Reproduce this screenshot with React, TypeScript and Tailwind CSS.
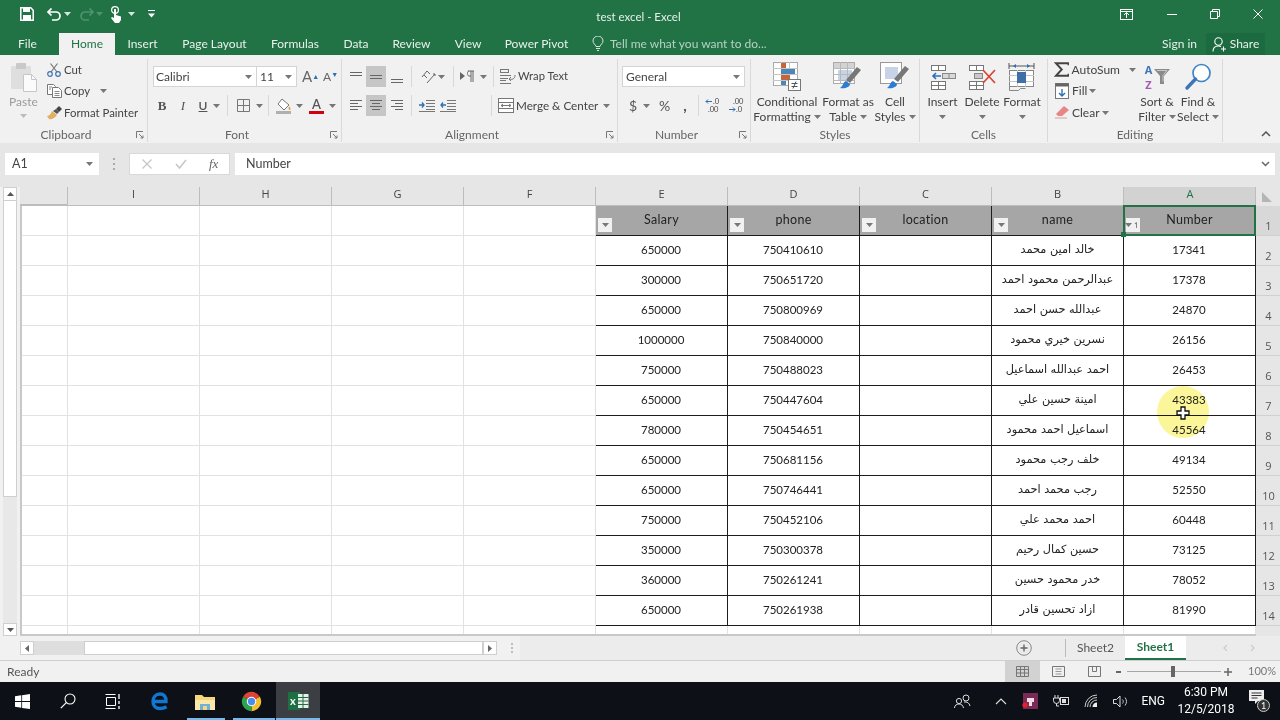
import React from "react";

const rows = [
  ["650000", "750410610", "خالد امين محمد", "17341"],
  ["300000", "750651720", "عبدالرحمن محمود احمد", "17378"],
  ["650000", "750800969", "عبدالله حسن احمد", "24870"],
  ["1000000", "750840000", "نسرين خيري محمود", "26156"],
  ["750000", "750488023", "احمد عبدالله اسماعيل", "26453"],
  ["650000", "750447604", "امينة حسين علي", "43383"],
  ["780000", "750454651", "اسماعيل احمد محمود", "45564"],
  ["650000", "750681156", "خلف رجب محمود", "49134"],
  ["650000", "750746441", "رجب محمد احمد", "52550"],
  ["750000", "750452106", "احمد محمد علي", "60448"],
  ["350000", "750300378", "حسين كمال رحيم", "73125"],
  ["360000", "750261241", "خدر محمود حسين", "78052"],
  ["650000", "750261938", "ازاد تحسين قادر", "81990"],
];

const emptyCols = ["", "I", "H", "G", "F"];

const Caret = ({ color = "#777" }: { color?: string }) => (
  <svg width="7" height="4" viewBox="0 0 7 4" className="shrink-0">
    <path d="M0 0h7L3.5 4z" fill={color} />
  </svg>
);

const Launcher = () => (
  <svg width="8" height="8" viewBox="0 0 8 8" className="shrink-0">
    <path d="M0.5 7V0.5H7M3 3l4 4M7 4.5V7H4.5" fill="none" stroke="#777" strokeWidth="1" />
  </svg>
);

const Lines = ({ ys, x1, x2 }: { ys: number[]; x1: number[]; x2: number[] }) => (
  <svg width="14" height="14" viewBox="0 0 14 14">
    {ys.map((y, i) => (
      <path key={i} d={`M${x1[i]} ${y}H${x2[i]}`} stroke="#666" strokeWidth="1" />
    ))}
  </svg>
);

const Sep = () => <div className="h-[21px] w-px shrink-0 bg-[#d8d8d8]" />;

function Group({ label, className, launcher, children }: { label: string; className: string; launcher?: boolean; children: React.ReactNode }) {
  return (
    <div className={`relative flex h-[83px] shrink-0 flex-col border-r border-[#d9d9d9] ${className}`}>
      <div className="h-[68px]">{children}</div>
      <div className={`flex h-[15px] items-center justify-center text-[12px] leading-none text-[#666] ${launcher ? "pr-[15px]" : ""}`}>{label}</div>
      {launcher && (
        <div className="absolute bottom-[3px] right-[3px]">
          <Launcher />
        </div>
      )}
    </div>
  );
}

function BigButton({ className, icon, line1, line2 }: { className: string; icon: React.ReactNode; line1: string; line2?: string }) {
  return (
    <div className={`flex shrink-0 flex-col items-center ${className}`}>
      <div className="flex h-[35px] items-center justify-center">{icon}</div>
      <div className="whitespace-nowrap text-[12px] leading-[15px] text-[#444]">{line1}</div>
      <div className="flex h-[15px] items-center gap-[3px] whitespace-nowrap text-[12px] leading-[15px] text-[#444]">
        {line2}
        <Caret />
      </div>
    </div>
  );
}

const CondIcon = () => (
  <svg width="28" height="30" viewBox="0 0 28 30">
    <rect x="0.5" y="0.5" width="24" height="23" fill="#fff" stroke="#aaa" />
    <path d="M8.5 0v24M16.5 0v24M0 6.5h25M0 12.5h25M0 18.5h25" stroke="#c5c5c5" />
    <rect x="8" y="1" width="5" height="5" fill="#c8643c" />
    <rect x="8" y="7" width="14" height="5" fill="#4a86b8" />
    <rect x="8" y="13" width="9" height="5" fill="#c8643c" />
    <rect x="8" y="19" width="5" height="4" fill="#4a86b8" />
    <rect x="15.5" y="17.5" width="12" height="11" fill="#fff" stroke="#777" />
    <path d="M18.5 21.5h6M18.5 24.5h6M23 19.5l-3 7" stroke="#555" fill="none" />
  </svg>
);

const TableIcon = () => (
  <svg width="30" height="30" viewBox="0 0 30 30">
    <rect x="0.5" y="0.5" width="21" height="21" fill="#fff" stroke="#aaa" />
    <rect x="1" y="1" width="20" height="5" fill="#d3d3d3" />
    <rect x="5" y="8" width="14" height="11" fill="#c7d3e6" />
    <path d="M7.5 0v22M14.5 0v22M0 6.5h22M0 12.5h22M0 18.5h22" stroke="#b8b8b8" />
    <path d="M24 5l4 3-11 13-4-3z" fill="#777" />
    <path d="M13 19c-3 1-2 4-6 7 5 1 10-1 10-4z" fill="#2b7cd3" />
  </svg>
);

const CellStylesIcon = () => (
  <svg width="30" height="30" viewBox="0 0 30 30">
    <rect x="0.5" y="0.5" width="21" height="21" fill="#fff" stroke="#999" />
    <rect x="5" y="5" width="13" height="12" fill="#c7d3e6" />
    <path d="M25 4l4 3-11 13-4-3z" fill="#777" />
    <path d="M13 19c-3 1-2 4-6 7 5 1 10-1 10-4z" fill="#2b7cd3" />
  </svg>
);

const InsertIcon = () => (
  <svg width="26" height="26" viewBox="0 0 26 26">
    <rect x="1.5" y="1.5" width="14" height="5" fill="#fff" stroke="#777" />
    <path d="M8.5 1.5v5" stroke="#777" />
    <rect x="1.5" y="17.5" width="14" height="8" fill="#fff" stroke="#777" />
    <path d="M8.5 17.5v8M1.5 21.5h14" stroke="#777" />
    <rect x="12.5" y="9.5" width="13" height="5" fill="#d8d8d8" stroke="#888" />
    <path d="M19 9.5v5" stroke="#888" />
    <path d="M11 12H3M6 9l-3 3 3 3" fill="none" stroke="#2b6fb5" strokeWidth="1.6" />
  </svg>
);

const DeleteIcon = () => (
  <svg width="28" height="26" viewBox="0 0 28 26">
    <rect x="1.5" y="1.5" width="14" height="5" fill="#fff" stroke="#777" />
    <path d="M8.5 1.5v5" stroke="#777" />
    <rect x="1.5" y="17.5" width="14" height="8" fill="#fff" stroke="#777" />
    <path d="M8.5 17.5v8M1.5 21.5h14" stroke="#777" />
    <rect x="6.5" y="9.5" width="8" height="5" fill="#c9c9c9" stroke="#888" />
    <path d="M15 6l12 13M27 6L15 19" stroke="#d8452e" strokeWidth="1.7" />
  </svg>
);

const FormatIcon = () => (
  <svg width="28" height="30" viewBox="0 0 28 30">
    <path d="M1 4h25M1 1v6M26 1v6" stroke="#555" fill="none" />
    <path d="M5 4l3-2v4zM22 4l-3-2v4z" fill="#2b6fb5" />
    <rect x="1.5" y="8.5" width="24" height="16" fill="#fff" stroke="#888" />
    <path d="M9.5 8v17M17.5 8v17M1 13.5h25M1 19.5h25" stroke="#c5c5c5" />
    <rect x="9" y="10" width="9" height="11" fill="#3f6fa8" />
    <path d="M1.5 25v3.5h9l2-2h5" fill="none" stroke="#888" />
  </svg>
);

const PasteIcon = () => (
  <svg width="28" height="30" viewBox="0 0 28 30">
    <rect x="1" y="4" width="20" height="23" rx="1" fill="#dedede" />
    <rect x="6" y="1" width="10" height="6" rx="1" fill="#c9c9c9" />
    <path d="M13.5 12.5h8l5 5v12h-13z" fill="#fbfbfb" stroke="#c6c6c6" />
    <path d="M21.5 12.5v5h5" fill="none" stroke="#c6c6c6" />
  </svg>
);

const CutIcon = () => (
  <svg width="14" height="14" viewBox="0 0 14 14">
    <path d="M4 9L10.5 0.5M10 9L3.5 0.5" stroke="#777" strokeWidth="1.2" fill="none" />
    <circle cx="3" cy="11" r="2.3" fill="none" stroke="#3f74b5" strokeWidth="1.2" />
    <circle cx="11" cy="11" r="2.3" fill="none" stroke="#3f74b5" strokeWidth="1.2" />
  </svg>
);

const CopyIcon = () => (
  <svg width="15" height="14" viewBox="0 0 15 14">
    <path d="M0.5 0.5h6l2 2v8h-8z" fill="#fff" stroke="#777" />
    <path d="M5.5 3.5h6l3 3v7h-9z" fill="#fff" stroke="#777" />
    <path d="M7.5 7.5h5M7.5 9.500h5M7.5 11.5h5M2 3h3M2 5h2" stroke="#888" />
  </svg>
);

const PainterIcon = () => (
  <svg width="15" height="14" viewBox="0 0 15 14">
    <path d="M0 10c3 0 4-3 5-5l5 4c-2 3-6 5-8 4z" fill="#e0b060" />
    <path d="M6 5l4 3 2-2-3-3z" fill="#555" />
    <path d="M9 3l3-3 3 3-3 3z" fill="#444" />
  </svg>
);

const BordersIcon = () => (
  <svg width="13" height="13" viewBox="0 0 13 13">
    <path d="M0.5 0.5h12v12h-12zM6.5 0.5v12M0.5 6.5h12" fill="none" stroke="#777" />
  </svg>
);

const FillIcon = () => (
  <svg width="16" height="16" viewBox="0 0 16 16">
    <path d="M6 1l7 6-5 5-6-6z" fill="#fff" stroke="#777" />
    <path d="M13 8c1 1.5 2 2.5 1.5 3.5-.7 1-2 .3-2-.7z" fill="#e3a23a" />
    <rect x="0" y="13" width="15" height="3" fill="#b0b0b0" />
  </svg>
);

const OrientIcon = () => (
  <svg width="15" height="15" viewBox="0 0 15 15">
    <path d="M1 8l5-6 3 3M3 6l3 3" fill="none" stroke="#666" />
    <path d="M6 14l8-9M12 5h2v2" fill="none" stroke="#666" />
  </svg>
);

const RtlIcon = () => (
  <svg width="15" height="13" viewBox="0 0 15 13">
    <path d="M0 2l5 4-5 4z" fill="#666" />
    <path d="M8 1h6M9 1c-2 0-2 5 0 5h2M11 1v11M13 1v11" fill="none" stroke="#666" />
  </svg>
);

const WrapIcon = () => (
  <svg width="16" height="15" viewBox="0 0 16 15">
    <rect x="0.5" y="0.5" width="8" height="3" fill="none" stroke="#777" />
    <path d="M0 6.5h11M0 9.5h8M0 11.5h6M0 14.5h11" stroke="#777" />
    <path d="M15 6c0 4-3 5-6 4M11 8l-2 2 2 2" fill="none" stroke="#777" />
  </svg>
);

const MergeIcon = () => (
  <svg width="16" height="15" viewBox="0 0 16 15">
    <rect x="0.5" y="0.5" width="15" height="14" fill="#fff" stroke="#777" />
    <path d="M0 4.5h16M0 10.5h16M3 7.5h10M5 6L3 7.5 5 9M11 6l2 1.5L11 9" fill="none" stroke="#777" />
  </svg>
);

const IndentIcon = ({ out }: { out?: boolean }) => (
  <svg width="16" height="12" viewBox="0 0 16 12">
    <path d="M7 0.5h9M7 3.5h9M7 6.5h9M7 9.5h9M0 11.5h16" stroke="#777" />
    <path d={out ? "M6 5H1M3 2.5L1 5l2 2.5" : "M0 5h5M3 2.5L5 5 3 7.5"} fill="none" stroke="#2b6fb5" strokeWidth="1.3" />
  </svg>
);

const DecIcon = ({ dir }: { dir: "more" | "less" }) => (
  <svg width="16" height="15" viewBox="0 0 16 15">
    <path d={dir === "more" ? "M7 3.5H1M3 1.5l-2 2 2 2" : "M1 11.5h6M5 9.5l2 2-2 2"} fill="none" stroke="#2b6fb5" />
    <text x={dir === "more" ? 8 : 5} y="6" fontSize="7.5" fill="#444">{dir === "more" ? ".0" : ".00"}</text>
    <text x={dir === "more" ? 3 : 8} y="14" fontSize="7.5" fill="#444">{dir === "more" ? ".00" : ".0"}</text>
  </svg>
);

const SigmaIcon = () => (
  <svg width="16" height="15" viewBox="0 0 16 15">
    <path d="M15 3V1H2l6 6.5L2 14h13v-2" fill="none" stroke="#444" strokeWidth="2" />
  </svg>
);

const FillDownIcon = () => (
  <svg width="14" height="16" viewBox="0 0 14 16">
    <rect x="0.5" y="0.5" width="13" height="15" fill="#fff" stroke="#777" />
    <rect x="0.5" y="0.5" width="13" height="3" fill="#666" />
    <path d="M7 6v7M4 10l3 3 3-3" fill="none" stroke="#2b6fb5" strokeWidth="1.4" />
  </svg>
);

const EraserIcon = () => (
  <svg width="14" height="13" viewBox="0 0 14 13">
    <path d="M9 0l5 4-7 6H3L1 8z" fill="#e88585" />
    <path d="M0 12h12" stroke="#d8a0a0" />
  </svg>
);

const SortIcon = () => (
  <div className="flex items-center">
    <div className="flex w-[11px] flex-col text-center font-['Open_Sans',sans-serif] text-[11px] font-bold leading-[15px]">
      <span className="text-[#3f74b5]">A</span>
      <span className="text-[#a35bb5]">Z</span>
    </div>
    <svg width="17" height="15" viewBox="0 0 17 15">
      <path d="M0 0h16l-6 7v8H6V7z" fill="#8a8a8a" />
      <path d="M3 1.500h10l-4 5v6" fill="none" stroke="#c8c8c8" />
    </svg>
  </div>
);

const FindIcon = () => (
  <svg width="28" height="28" viewBox="0 0 28 28">
    <circle cx="17.5" cy="10" r="8.5" fill="#fff" stroke="#3f86c9" strokeWidth="1.7" />
    <path d="M11.5 16L3 25" stroke="#3f74b5" strokeWidth="3.4" strokeLinecap="round" />
  </svg>
);

function Ribbon() {
  return (
    <div className="flex h-[88px] bg-[#f1f1f1] pt-[4px]">
      <Group label="Clipboard" className="w-[148px]" launcher>
        <div className="flex">
          <div className="flex w-[47px] shrink-0 flex-col items-center text-[#9b9b9b]">
            <div className="flex h-[35px] items-center">
              <PasteIcon />
            </div>
            <div className="text-[12px] leading-[15px]">Paste</div>
            <div className="mt-[5px]">
              <Caret color="#bbb" />
            </div>
          </div>
          <div className="text-[11.4px] leading-none text-[#444]">
            <div className="flex h-[21px] items-center gap-[3px]">
              <CutIcon /> Cut
            </div>
            <div className="flex h-[22px] items-center gap-[2px]">
              <CopyIcon /> Copy <span className="ml-[8px]"><Caret /></span>
            </div>
            <div className="flex h-[21px] items-center gap-[2px] whitespace-nowrap">
              <PainterIcon /> Format Painter
            </div>
          </div>
        </div>
      </Group>

      <Group label="Font" className="w-[194px]" launcher>
        <div className="flex items-center pl-[5px] pt-[7px]">
          <div className="flex h-[21px] w-[104px] items-center justify-between border border-[#d4d4d4] bg-white pl-[2px] pr-[4px] text-[12px] text-[#444]">
            Calibri <Caret />
          </div>
          <div className="flex h-[21px] w-[40px] items-center justify-between border border-l-0 border-[#d4d4d4] bg-white pl-[3px] pr-[4px] text-[12px] text-[#444]">
            11 <Caret />
          </div>
          <span className="ml-[5px] w-[21px] text-[15px] leading-none text-[#666]">A<sup className="text-[7px] text-[#2b6fb5]">▲</sup></span>
          <span className="text-[12px] leading-none text-[#666]">A<sup className="text-[7px] text-[#2b6fb5]">▼</sup></span>
        </div>
        <div className="mt-[8px] flex h-[21px] items-center text-[#555]">
          <span className="ml-[8px] w-[12px] text-center font-['Liberation_Serif',serif] text-[13px] font-bold">B</span>
          <span className="ml-[9px] w-[12px] text-center font-['Liberation_Serif',serif] text-[13px] italic">I</span>
          <span className="ml-[8px] w-[12px] text-center text-[12px] font-semibold underline">U</span>
          <span className="ml-[4px]"><Caret /></span>
          <span className="ml-[7px]"><Sep /></span>
          <span className="ml-[9px]"><BordersIcon /></span>
          <span className="ml-[6px]"><Caret /></span>
          <span className="ml-[5px]"><Sep /></span>
          <span className="ml-[7px]"><FillIcon /></span>
          <span className="ml-[4px]"><Caret /></span>
          <span className="ml-[6px] flex w-[15px] flex-col items-center">
            <span className="text-[13px] font-semibold leading-[12px] text-[#555]">A</span>
            <span className="mt-[1px] h-[3px] w-[15px] bg-[#d2010f]" />
          </span>
          <span className="ml-[5px]"><Caret /></span>
        </div>
      </Group>

      <Group label="Alignment" className="w-[276px]" launcher>
        <div className="flex items-center pl-[3px] pt-[7px] text-[11.2px] text-[#444]">
          <div className="flex h-[21px] w-[21px] items-center justify-center"><Lines ys={[2.5, 5.5]} x1={[1, 1]} x2={[13, 13]} /></div>
          <div className="flex h-[21px] w-[20px] items-center justify-center bg-[#c6c6c6]"><Lines ys={[5.5, 8.5]} x1={[1, 1]} x2={[13, 13]} /></div>
          <div className="flex h-[21px] w-[21px] items-center justify-center"><Lines ys={[9.5, 12.5]} x1={[1, 1]} x2={[13, 13]} /></div>
          <span className="ml-[4px]"><Sep /></span>
          <span className="ml-[9px]"><OrientIcon /></span>
          <span className="ml-[2px]"><Caret /></span>
          <span className="ml-[8px]"><Sep /></span>
          <span className="ml-[6px]"><RtlIcon /></span>
          <span className="ml-[5px]"><Caret /></span>
          <span className="ml-[6px]"><Sep /></span>
          <span className="ml-[6px] flex items-center gap-[2px] whitespace-nowrap"><WrapIcon /> Wrap Text</span>
        </div>
        <div className="mt-[8px] flex items-center pl-[3px] text-[11.7px] text-[#444]">
          <div className="flex h-[21px] w-[21px] items-center justify-center"><Lines ys={[1.5, 4.5, 7.5, 10.5]} x1={[1, 1, 1, 1]} x2={[13, 9, 13, 9]} /></div>
          <div className="flex h-[21px] w-[20px] items-center justify-center bg-[#c6c6c6]"><Lines ys={[1.5, 4.5, 7.5, 10.5]} x1={[1, 3, 1, 3]} x2={[13, 11, 13, 11]} /></div>
          <div className="flex h-[21px] w-[21px] items-center justify-center"><Lines ys={[1.5, 4.5, 7.5, 10.5]} x1={[1, 5, 1, 5]} x2={[13, 13, 13, 13]} /></div>
          <span className="ml-[4px]"><Sep /></span>
          <span className="ml-[7px]"><IndentIcon /></span>
          <span className="ml-[5px]"><IndentIcon out /></span>
          <span className="ml-[35px]"><Sep /></span>
          <span className="ml-[6px] flex items-center gap-[2px] whitespace-nowrap"><MergeIcon /> Merge &amp; Center</span>
          <span className="ml-auto mr-[7px]"><Caret /></span>
        </div>
      </Group>

      <Group label="Number" className="w-[133px]" launcher>
        <div className="pl-[4px] pt-[7px]">
          <div className="flex h-[21px] w-[123px] items-center justify-between border border-[#d4d4d4] bg-white pl-[3px] pr-[4px] text-[12px] text-[#444]">
            General <Caret />
          </div>
        </div>
        <div className="mt-[8px] flex h-[21px] items-center text-[#555]">
          <span className="ml-[10px] w-[10px] text-center text-[14px]">$</span>
          <span className="ml-[5px]"><Caret /></span>
          <span className="ml-[9px] text-[14px]">%</span>
          <span className="ml-[13px] text-[15px] font-bold leading-none">,</span>
          <span className="ml-[11px]"><Sep /></span>
          <span className="ml-[6px]"><DecIcon dir="more" /></span>
          <span className="ml-[7px]"><DecIcon dir="less" /></span>
        </div>
      </Group>

      <Group label="Styles" className="w-[169px]">
        <div className="flex">
          <BigButton className="w-[72px]" icon={<CondIcon />} line1="Conditional" line2="Formatting" />
          <BigButton className="w-[50px]" icon={<TableIcon />} line1="Format as" line2="Table" />
          <BigButton className="w-[44px]" icon={<CellStylesIcon />} line1="Cell" line2="Styles" />
        </div>
      </Group>

      <Group label="Cells" className="w-[128px]">
        <div className="flex">
          <BigButton className="w-[45px]" icon={<InsertIcon />} line1="Insert" />
          <BigButton className="w-[34px]" icon={<DeleteIcon />} line1="Delete" />
          <BigButton className="w-[46px]" icon={<FormatIcon />} line1="Format" />
        </div>
      </Group>

      <Group label="Editing" className="w-[175px]">
        <div className="flex">
          <div className="w-[88px] shrink-0 text-[12px] leading-none text-[#444]">
            <div className="flex h-[21px] items-center pl-[6px]">
              <SigmaIcon /> <span className="ml-[2px]">AutoSum</span>
              <span className="ml-[9px]"><Caret /></span>
            </div>
            <div className="flex h-[22px] items-center pl-[7px]">
              <FillDownIcon /> <span className="ml-[3px]">Fill</span>
              <span className="ml-[2px]"><Caret /></span>
            </div>
            <div className="flex h-[21px] items-center pl-[7px]">
              <EraserIcon /> <span className="ml-[3px]">Clear</span>
              <span className="ml-[2px]"><Caret /></span>
            </div>
          </div>
          <BigButton className="w-[42px]" icon={<SortIcon />} line1="Sort &" line2="Filter" />
          <BigButton className="w-[40px]" icon={<FindIcon />} line1="Find &" line2="Select" />
        </div>
      </Group>

      <div className="flex flex-1 items-end justify-end pb-[6px] pr-[9px]">
        <svg width="10" height="6" viewBox="0 0 10 6">
          <path d="M1 5l4-4 4 4" fill="none" stroke="#555" strokeWidth="1.5" />
        </svg>
      </div>
    </div>
  );
}

function TitleBar() {
  return (
    <div className="bg-[#217346] text-white">
      <div className="relative flex h-[28px] items-center">
        <svg className="ml-[20px]" width="14" height="14" viewBox="0 0 14 14">
          <path d="M0.8 0.8h10l2.4 2.4v10H0.8z" fill="none" stroke="#fff" strokeWidth="1.5" />
          <rect x="3" y="1" width="7" height="4" fill="#fff" />
          <rect x="3" y="8" width="8" height="5" fill="#fff" />
        </svg>
        <svg className="ml-[13px]" width="14" height="13" viewBox="0 0 14 13">
          <path d="M1 4h8a4 4 0 0 1 0 8H5M4.5 0.5L1 4l3.5 3.5" fill="none" stroke="#fff" strokeWidth="1.7" />
        </svg>
        <span className="ml-[3px]"><Caret color="#d5e5dc" /></span>
        <svg className="ml-[9px]" width="14" height="13" viewBox="0 0 14 13">
          <path d="M13 4H5a4 4 0 0 0 0 8h4M9.5 0.5L13 4 9.5 7.5" fill="none" stroke="#4f9270" strokeWidth="1.7" />
        </svg>
        <span className="ml-[2px]"><Caret color="#4f9270" /></span>
        <svg className="ml-[6px]" width="14" height="17" viewBox="0 0 14 17">
          <circle cx="6" cy="4" r="3.4" fill="none" stroke="#fff" strokeWidth="1.2" />
          <path d="M5 3h2v6l5 1.5V14l-2 3H6L2 12l1-1 2 1z" fill="#fff" />
        </svg>
        <span className="ml-[5px]"><Caret color="#d5e5dc" /></span>
        <svg className="ml-[13px]" width="7" height="8" viewBox="0 0 7 8">
          <path d="M0 0.5h7" stroke="#fff" />
          <path d="M0 3.5h7L3.5 7.5z" fill="#fff" />
        </svg>
        <div className="ml-auto flex items-center">
          <svg width="13" height="11" viewBox="0 0 13 11">
            <rect x="0.5" y="0.5" width="12" height="10" fill="none" stroke="#fff" />
            <path d="M0 2.5h13M6.500 9V4M4 6l2.5-2.5L9 6" fill="none" stroke="#fff" />
          </svg>
          <div className="ml-[34px] h-px w-[10px] bg-white" />
          <svg className="ml-[33px]" width="10" height="10" viewBox="0 0 10 10">
            <path d="M2.5 2.5V0.5h7v7h-2M0.5 2.5h7v7h-7z" fill="none" stroke="#fff" />
          </svg>
          <svg className="ml-[33px] mr-[17px]" width="10" height="10" viewBox="0 0 10 10">
            <path d="M0.5 0.5l9 9M9.5 0.5l-9 9" stroke="#fff" />
          </svg>
        </div>
        <div className="pointer-events-none absolute left-0 right-0 top-[9px] pr-[3px] text-center text-[11.5px] leading-[15px] text-[#e6f0ea]">test excel - Excel</div>
      </div>
      <div className="flex h-[27px] items-end text-[12px] text-[#e8f1ec]">
        <div className="flex h-[27px] w-[55px] items-center justify-center pt-[4px]">File</div>
        <div className="ml-[4px] flex h-[22px] w-[56px] items-center justify-center bg-[#f1f1f1] pb-[1px] text-[#217346]">Home</div>
        <div className="flex h-[27px] w-[55px] items-center justify-center pt-[4px]">Insert</div>
        <div className="flex h-[27px] w-[89px] items-center justify-center pt-[4px]">Page Layout</div>
        <div className="flex h-[27px] w-[72px] items-center justify-center pt-[4px]">Formulas</div>
        <div className="flex h-[27px] w-[50px] items-center justify-center pt-[4px]">Data</div>
        <div className="flex h-[27px] w-[61px] items-center justify-center pt-[4px]">Review</div>
        <div className="flex h-[27px] w-[52px] items-center justify-center pt-[4px]">View</div>
        <div className="flex h-[27px] w-[85px] items-center justify-center pt-[4px]">Power Pivot</div>
        <div className="ml-[13px] flex h-[27px] items-center pt-[4px] text-[#b5d2c2]">
          <svg width="12" height="15" viewBox="0 0 12 15">
            <path d="M4 10.5C3.5 8.5 1 7.5 1 5a5 5 0 0 1 10 0c0 2.5-2.5 3.5-3 5.5zM4 12.5h4M5 14.5h2" fill="none" stroke="#d5e5dc" />
          </svg>
          <span className="ml-[6px]">Tell me what you want to do...</span>
        </div>
        <div className="ml-auto flex h-[27px] items-center pt-[4px]">
          <span>Sign in</span>
          <div className="ml-[9px] mr-[15px] flex h-[22px] w-[59px] items-center justify-center gap-[3px] self-end bg-[#1c6a3f]">
            <svg width="15" height="15" viewBox="0 0 15 15">
              <circle cx="6.5" cy="4.5" r="3.7" fill="none" stroke="#fff" strokeWidth="1.1" />
              <path d="M1 14.5c0-3.500 2-5.500 5.500-5.500 1 0 2 .2 2.500.6M11.500 9.500v5M9 12h5" fill="none" stroke="#fff" strokeWidth="1.1" />
            </svg>
            Share
          </div>
        </div>
      </div>
    </div>
  );
}

function FormulaBar() {
  return (
    <div className="flex h-[44px] items-start bg-[#e6e6e6] pt-[10px] text-[12.5px] text-[#444]">
      <div className="ml-[5px] flex h-[22px] w-[94px] items-center justify-between bg-white pl-[7px] pr-[6px]">
        A1 <Caret />
      </div>
      <div className="ml-[14px] mt-[5px] flex h-[12px] flex-col justify-between">
        <span className="h-[2px] w-[2px] bg-[#aaa]" />
        <span className="h-[2px] w-[2px] bg-[#aaa]" />
        <span className="h-[2px] w-[2px] bg-[#aaa]" />
      </div>
      <div className="ml-[14px] flex h-[22px] w-[101px] items-center border border-[#d9d9d9] bg-white">
        <svg className="ml-[12px]" width="10" height="10" viewBox="0 0 10 10">
          <path d="M0.5 0.5l9 9M9.5 0.5l-9 9" stroke="#c8c8c8" strokeWidth="1.4" />
        </svg>
        <svg className="ml-[23px]" width="12" height="10" viewBox="0 0 12 10">
          <path d="M1 5l3.5 4L11 1" fill="none" stroke="#c8c8c8" strokeWidth="1.6" />
        </svg>
        <span className="ml-[22px] font-['Liberation_Serif',serif] text-[13px] italic text-[#666]">fx</span>
      </div>
      <div className="ml-[5px] flex h-[22px] w-[1040px] items-center justify-between bg-white pl-[11px] pr-[5px]">
        Number
        <svg width="9" height="6" viewBox="0 0 9 6">
          <path d="M1 1l3.5 3.5L8 1" fill="none" stroke="#666" strokeWidth="1.5" />
        </svg>
      </div>
    </div>
  );
}

const FilterBtn = ({ sorted }: { sorted?: boolean }) => (
  <div className="absolute bottom-[3px] left-[2px] flex h-[14px] w-[14px] items-center justify-center gap-px bg-[#f1f1f1]">
    <Caret color="#777" />
    {sorted && <span className="text-[8px] leading-none text-[#555]">↿</span>}
  </div>
);

const Empty = () => <div className="border-b border-r border-[#e2e2e2] bg-white" />;
const Cell = ({ children, arabic }: { children?: React.ReactNode; arabic?: boolean }) => (
  <div
    dir={arabic ? "rtl" : undefined}
    className={`flex items-center justify-center whitespace-nowrap border-b border-r border-[#1c1c1c] bg-white ${arabic ? "font-['DejaVu_Sans',sans-serif] text-[11.3px]" : "pb-[2px] pr-[1px] text-[11.5px]"}`}
  >
    {children}
  </div>
);
const Head = ({ children, sorted }: { children: string; sorted?: boolean }) => (
  <div className="relative flex items-center justify-center border-b border-r border-[#1c1c1c] bg-[#a6a6a6] pb-[1px] text-[12.5px] tracking-[0.3px]">
    {children}
    <FilterBtn sorted={sorted} />
  </div>
);
const RowNo = ({ n }: { n: number }) => (
  <div className={`flex items-end justify-center border-b border-[#d0d0d0] pb-[1px] pl-[1px] font-['Open_Sans',sans-serif] text-[11px] text-[#555] ${n === 1 ? "bg-[#d8d8d8]" : "bg-[#e6e6e6]"}`}>{n}</div>
);

function Sheet() {
  return (
    <div className="flex h-[449px] bg-[#f1f1f1]">
      <div className="flex w-[20px] shrink-0 flex-col pl-[3px] pr-[3px]">
        <div className="flex h-[14px] w-[14px] items-center justify-center border border-[#cfcfcf] bg-white">
          <svg width="7" height="4" viewBox="0 0 7 4"><path d="M0 4h7L3.5 0z" fill="#555" /></svg>
        </div>
        <div className="h-[296px] w-[14px] border border-t-0 border-[#cfcfcf] bg-white" />
        <div className="h-[126px] w-[14px] bg-[#e8e8e8]" />
        <div className="flex h-[13px] w-[14px] items-center justify-center border border-[#cfcfcf] bg-white">
          <Caret color="#555" />
        </div>
      </div>
      <div className="relative min-w-0 flex-1 overflow-hidden text-[#222]">
        <div className="grid grid-cols-[48px_repeat(9,132px)_24px] grid-rows-[19px_repeat(14,30px)_10px]">
          <div className="border-b-2 border-r border-[#bdbdbd] bg-[#e6e6e6]" />
          {["I", "H", "G", "F", "E", "D", "C", "B"].map((c) => (
            <div key={c} className="flex items-center justify-center border-b border-r border-[#bdbdbd] bg-[#e6e6e6] pb-[3px] font-['Open_Sans',sans-serif] text-[11px] text-[#444]">{c}</div>
          ))}
          <div className="flex items-center justify-center border-b border-r border-[#bdbdbd] bg-[#d2d2d2] pb-[3px] pl-[1px] font-['Open_Sans',sans-serif] text-[11px] text-[#217346]">A</div>
          <div className="flex items-center justify-center bg-[#e6e6e6] pr-[3px]">
            <svg width="10" height="10" viewBox="0 0 10 10"><path d="M0 0l10 10H0z" fill="#b5b5b5" /></svg>
          </div>

          {emptyCols.map((_, i) => <Empty key={i} />)}
          <Head>Salary</Head>
          <Head>phone</Head>
          <Head>location</Head>
          <Head>name</Head>
          <Head sorted>Number</Head>
          <RowNo n={1} />

          {rows.map((r, i) => (
            <React.Fragment key={i}>
              {emptyCols.map((_, j) => <Empty key={j} />)}
              <Cell>{r[0]}</Cell>
              <Cell>{r[1]}</Cell>
              <Cell />
              <Cell arabic>{r[2]}</Cell>
              <Cell>{r[3]}</Cell>
              <RowNo n={i + 2} />
            </React.Fragment>
          ))}

          {Array.from({ length: 10 }).map((_, i) => <Empty key={i} />)}
          <div className="bg-[#e6e6e6]" />
        </div>

        {/* frame of the grid */}
        <div className="absolute bottom-0 left-0 top-[19px] w-[2px] bg-[#c8c8c8]" />
        <div className="absolute bottom-0 left-0 right-[24px] h-[2px] bg-[#c8c8c8]" />

        {/* selected cell */}
        <div className="pointer-events-none absolute left-[1103px] top-[18px] h-[31px] w-[133px] border-2 border-[#217346]" />
        <div className="absolute left-[1101px] top-[45px] h-[5px] w-[5px] bg-[#217346]" />

        {/* mouse highlight */}
        <div className="absolute left-[1137px] top-[199px] h-[52px] w-[52px] rounded-full bg-[#fbf69a] mix-blend-multiply" />
        <svg className="absolute left-[1156px] top-[219px]" width="14" height="14" viewBox="0 0 14 14">
          <path d="M5 1h4v4h4v4H9v4H5V9H1V5h4z" fill="#fff" stroke="#111" strokeWidth="1.3" />
        </svg>
      </div>
    </div>
  );
}

function SheetTabs() {
  return (
    <div className="flex h-[24px] bg-[#e6e6e6] text-[#666]">
      <div className="flex w-[520px] shrink-0 items-center bg-[#f1f1f1] pl-[20px]">
        <div className="flex h-[14px] w-[14px] items-center justify-center border border-[#cfcfcf] bg-white">
          <svg width="4" height="7" viewBox="0 0 4 7"><path d="M4 0v7L0 3.500z" fill="#666" /></svg>
        </div>
        <div className="h-[14px] w-[50px] bg-[#dedede]" />
        <div className="h-[14px] w-[399px] border border-[#cfcfcf] bg-white" />
        <div className="flex h-[14px] w-[14px] items-center justify-center border border-[#cfcfcf] bg-white">
          <svg width="4" height="7" viewBox="0 0 4 7"><path d="M0 0v7l4-3.500z" fill="#666" /></svg>
        </div>
        <div className="ml-[14px] flex h-[10px] flex-col justify-between">
          <span className="h-[2px] w-[2px] bg-[#bbb]" />
          <span className="h-[2px] w-[2px] bg-[#bbb]" />
          <span className="h-[2px] w-[2px] bg-[#bbb]" />
        </div>
      </div>
      <div className="flex flex-1 items-center bg-[#ececec]">
        <svg className="ml-[496px]" width="16" height="16" viewBox="0 0 16 16">
          <circle cx="8" cy="8" r="7.3" fill="none" stroke="#888" />
          <path d="M8 4.500v7M4.500 8h7" stroke="#666" strokeWidth="1.4" />
        </svg>
        <div className="ml-[33px] h-[18px] w-px bg-[#bbb]" />
        <div className="w-[59px] text-center text-[12px] text-[#555]">Sheet2</div>
        <div className="flex h-[24px] w-[61px] items-center justify-center border-b-2 border-[#217346] bg-white text-[12px] font-bold text-[#217346]">Sheet1</div>
        <svg className="ml-[37px]" width="5" height="8" viewBox="0 0 5 8"><path d="M4 1L1 4l3 3" fill="none" stroke="#ccc" strokeWidth="1.3" /></svg>
        <svg className="ml-[22px]" width="5" height="8" viewBox="0 0 5 8"><path d="M1 1l3 3-3 3" fill="none" stroke="#ccc" strokeWidth="1.3" /></svg>
      </div>
    </div>
  );
}

function StatusBar() {
  return (
    <div className="flex h-[22px] items-center border-t border-[#cfcfcf] bg-[#f1f1f1] text-[12px] text-[#555]">
      <span className="ml-[7px]">Ready</span>
      <div className="ml-auto flex h-full items-center">
        <div className="flex h-full w-[35px] items-center justify-center bg-[#d2d2d2]">
          <svg width="13" height="11" viewBox="0 0 13 11">
            <path d="M0.5 0.5h12v10H.5zM4.500 0.5v10M8.500 0.5v10M0.5 3.500h12M0.5 7h12" fill="none" stroke="#777" />
          </svg>
        </div>
        <svg className="ml-[12px]" width="13" height="11" viewBox="0 0 13 11">
          <path d="M0.5 0.5h12v10H.5z" fill="none" stroke="#777" />
          <path d="M3.500 3h6M3.500 5.500h6M3.500 8h6" stroke="#999" />
        </svg>
        <svg className="ml-[23px]" width="13" height="11" viewBox="0 0 13 11">
          <path d="M0.5 0.5h12v10H.5zM4.500 0.5v5h4v-5" fill="none" stroke="#777" />
        </svg>
        <div className="ml-[15px] h-[2px] w-[5px] bg-[#666]" />
        <div className="relative ml-[6px] h-px w-[94px] bg-[#a5a5a5]">
          <div className="absolute left-[44px] top-[-5px] h-[11px] w-[4px] bg-[#666]" />
        </div>
        <svg className="ml-[3px]" width="8" height="8" viewBox="0 0 8 8"><path d="M4 0v8M0 4h8" stroke="#666" strokeWidth="1.5" /></svg>
        <span className="ml-[16px] mr-[8px] w-[24px] whitespace-nowrap text-[11px] text-[#777]">100%</span>
      </div>
    </div>
  );
}

function Taskbar() {
  return (
    <div className="flex h-[38px] items-center bg-[#0d1016] text-white">
      <svg className="ml-[15px]" width="15" height="15" viewBox="0 0 15 15">
        <path d="M0 2.200L6.300 1.300v5.800H0zM7.100 1.200L15 0v7.100H7.100zM0 7.900h6.300v5.800L0 12.800zM7.100 7.900H15V15l-7.900-1.100z" fill="#fff" />
      </svg>
      <svg className="ml-[30px]" width="16" height="16" viewBox="0 0 16 16">
        <circle cx="10" cy="6" r="5" fill="none" stroke="#fff" strokeWidth="1.1" />
        <path d="M6.300 9.700L0.800 15.200" stroke="#fff" strokeWidth="1.2" />
      </svg>
      <svg className="ml-[29px]" width="16" height="15" viewBox="0 0 16 15">
        <path d="M0.5 0.5h10M0.5 14.500h10M1.500 3.500h9v8h-9z" fill="none" stroke="#fff" />
        <path d="M14 0v5M14 7v3M14 12v3" stroke="#fff" strokeWidth="1.3" />
      </svg>
      <svg className="ml-[29px]" width="20" height="20" viewBox="0 0 20 20">
        <path d="M4 10.500h12C16.500 5.500 13.500 3 10 3 6 3 3 6 3 10.500 3 15 6 17.500 10 17.500c2.500 0 4.500-.6 6.500-1.800" fill="none" stroke="#0f78d4" strokeWidth="3.4" />
      </svg>
      <svg className="ml-[25px]" width="20" height="17" viewBox="0 0 20 17">
        <path d="M0 2h7l2 2h11v13H0z" fill="#f6d77c" />
        <path d="M0 7h20v10H0z" fill="#fbe9a9" />
        <path d="M5 11h10v6H5z" fill="#6fb1d9" />
        <path d="M8 13h4v4H8z" fill="#f6d77c" />
      </svg>
      <svg className="ml-[26px]" width="21" height="21" viewBox="0 0 24 24">
        <path d="M2.470 6.500A11 11 0 0 1 21.530 6.500L12 12z" fill="#dc4437" />
        <path d="M21.530 6.500A11 11 0 0 1 12 23L12 12z" fill="#f5c02e" />
        <path d="M12 23A11 11 0 0 1 2.470 6.500L12 12z" fill="#2fa24d" />
        <circle cx="12" cy="12" r="5.400" fill="#fff" />
        <circle cx="12" cy="12" r="4.200" fill="#4a8bf0" />
      </svg>
      <div className="ml-[14px] flex h-[38px] w-[44px] items-center justify-center bg-[#3b3e42]">
        <svg width="21" height="20" viewBox="0 0 21 20">
          <rect x="0" y="1" width="12" height="18" fill="#1e6f43" />
          <rect x="10" y="3" width="10.500" height="14" fill="#e8efe9" />
          <path d="M10 6.500h10.500M10 10h10.500M10 13.500h10.500M15 3v14" stroke="#1e6f43" />
          <text x="2" y="14" fontSize="11" fontWeight="700" fill="#fff">x</text>
        </svg>
      </div>
      <div className="ml-auto flex items-center">
        <svg width="17" height="15" viewBox="0 0 17 15">
          <circle cx="5" cy="7" r="2.600" fill="none" stroke="#ddd" />
          <circle cx="12" cy="4" r="3" fill="none" stroke="#ddd" />
          <path d="M0.5 14c0-2.500 2-4 4.500-4s4 1.500 4.500 4M10 8c3-.5 5.500 1 6 4" fill="none" stroke="#ddd" />
        </svg>
        <svg className="ml-[24px]" width="12" height="7" viewBox="0 0 12 7">
          <path d="M1 6l5-5 5 5" fill="none" stroke="#ddd" strokeWidth="1.1" />
        </svg>
        <svg className="ml-[15px]" width="16" height="16" viewBox="0 0 16 16">
          <rect x="1" y="0" width="15" height="16" fill="#7a2a55" />
          <path d="M5 5h7v4H5zM7 9v4h3V9" fill="#f4dfe8" />
          <circle cx="3" cy="12" r="2.600" fill="#e8202c" />
        </svg>
        <svg className="ml-[15px]" width="16" height="12" viewBox="0 0 16 12">
          <path d="M2 0v3M5 0v3M0.5 3h6v2.500a3 3 0 0 1-6 0zM3.500 8.500V11H6" fill="none" stroke="#ddd" />
          <rect x="7.500" y="2.500" width="8" height="7" fill="none" stroke="#ddd" />
          <rect x="9" y="4" width="4" height="4" fill="#ddd" />
        </svg>
        <svg className="ml-[15px]" width="14" height="14" viewBox="0 0 14 14">
          <path d="M1 13a12 12 0 0 1 12-12M3.500 13A9.500 9.500 0 0 1 13 3.500M6 13a7 7 0 0 1 7-7" fill="none" stroke="#ccc" />
          <path d="M8.500 13a4.500 4.500 0 0 1 4.500-4.500V13z" fill="#eee" />
        </svg>
        <svg className="ml-[15px]" width="15" height="13" viewBox="0 0 15 13">
          <path d="M0.5 4.500h3L7 1v11L3.500 8.500h-3z" fill="none" stroke="#ddd" />
          <path d="M9.500 4.500c1 1.200 1 2.800 0 4M12 2.500c2 2.500 2 5.500 0 8" fill="none" stroke="#ccc" />
        </svg>
        <span className="ml-[13px] font-['Roboto',sans-serif] text-[12px]">ENG</span>
        <div className="ml-[10px] w-[62px] text-center font-['Roboto',sans-serif] text-[12px] leading-[17px]">
          <div>6:30 PM</div>
          <div>12/5/2018</div>
        </div>
        <div className="relative ml-[12px] mr-[11px] h-[22px] w-[20px]">
          <svg width="15" height="15" viewBox="0 0 15 15">
            <path d="M0 0h15v11H9l-3 3v-3H0z" fill="#eee" />
            <path d="M2.500 3h10M2.500 5.500h10M2.500 8h6" stroke="#333" />
          </svg>
          <div className="absolute bottom-0 right-[-1px] flex h-[13px] w-[13px] items-center justify-center rounded-full border border-[#ccc] bg-[#333] text-[9px] leading-none">1</div>
        </div>
      </div>
    </div>
  );
}

export default function App() {
  return (
    <div className="relative h-[720px] w-[1280px] overflow-hidden font-['Lato',sans-serif]">
      <TitleBar />
      <Ribbon />
      <FormulaBar />
      <Sheet />
      <SheetTabs />
      <StatusBar />
      <Taskbar />
      {/* running-app markers on the taskbar */}
      <div className="absolute bottom-0 left-[187px] h-[2px] w-[38px] bg-[#76b9ed]" />
      <div className="absolute bottom-0 left-[233px] h-[2px] w-[42px] bg-[#76b9ed]" />
      <div className="absolute bottom-0 left-[276px] h-[2px] w-[44px] bg-[#76b9ed]" />
    </div>
  );
}
